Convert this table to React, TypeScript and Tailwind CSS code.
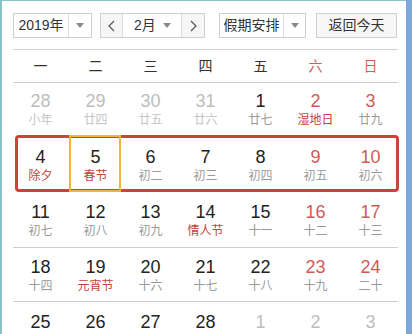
import React from 'react';

type Day = { d: number; l?: string; muted?: boolean; red?: boolean; fest?: boolean };

const WEEKS: Day[][] = [
  [
    { d: 28, l: '小年', muted: true },
    { d: 29, l: '廿四', muted: true },
    { d: 30, l: '廿五', muted: true },
    { d: 31, l: '廿六', muted: true },
    { d: 1, l: '廿七' },
    { d: 2, l: '湿地日', red: true, fest: true },
    { d: 3, l: '廿九', red: true },
  ],
  [
    { d: 4, l: '除夕', fest: true },
    { d: 5, l: '春节', fest: true },
    { d: 6, l: '初二' },
    { d: 7, l: '初三' },
    { d: 8, l: '初四' },
    { d: 9, l: '初五', red: true },
    { d: 10, l: '初六', red: true },
  ],
  [
    { d: 11, l: '初七' },
    { d: 12, l: '初八' },
    { d: 13, l: '初九' },
    { d: 14, l: '情人节', fest: true },
    { d: 15, l: '十一' },
    { d: 16, l: '十二', red: true },
    { d: 17, l: '十三', red: true },
  ],
  [
    { d: 18, l: '十四' },
    { d: 19, l: '元宵节', fest: true },
    { d: 20, l: '十六' },
    { d: 21, l: '十七' },
    { d: 22, l: '十八' },
    { d: 23, l: '十九', red: true },
    { d: 24, l: '二十', red: true },
  ],
  // last row is cut by the window, only the numbers show
  [
    { d: 25 },
    { d: 26 },
    { d: 27 },
    { d: 28 },
    { d: 1, muted: true },
    { d: 2, muted: true },
    { d: 3, muted: true },
  ],
];

const WEEKDAYS = ['一', '二', '三', '四', '五', '六', '日'];

const Caret = () => (
  <svg width="8" height="5" viewBox="0 0 8 5">
    <path d="M0 0h8L4 5z" fill="#8a8a8a" />
  </svg>
);

const Chevron = ({ dir }: { dir: 'l' | 'r' }) => (
  <svg width="7" height="12" viewBox="0 0 7 12">
    <polyline
      points={dir === 'l' ? '6,1 1,6 6,11' : '1,1 6,6 1,11'}
      fill="none"
      stroke="#555"
      strokeWidth="1.2"
    />
  </svg>
);

const Cell = ({ day, selected }: { day: Day; selected?: boolean }) => {
  const numColor = day.muted ? 'text-[#bdbdbd]' : day.red ? 'text-[#cf5b58]' : 'text-[#222]';
  const lunarColor = day.muted
    ? 'text-[#c4c4c4]'
    : day.fest
    ? 'text-[#c8403a]'
    : 'text-[#9a9a9a]';
  return (
    <div className="relative flex flex-col items-center">
      {selected && (
        <div className="absolute left-[1px] right-[2px] top-[-12px] bottom-[-8px] border-2 border-[#f3b43c]" />
      )}
      <span className={`text-[18px] leading-[20px] ${numColor}`}>{day.d}</span>
      {day.l && <span className={`mt-px text-[12px] leading-[16px] ${lunarColor}`}>{day.l}</span>}
    </div>
  );
};

const Week = ({ days, sel }: { days: Day[]; sel?: number }) => (
  <div className="grid grid-cols-[repeat(7,55px)]">
    {days.map((day, i) => (
      <Cell key={i} day={day} selected={sel === i} />
    ))}
  </div>
);

const App = () => {
  return (
    <div
      className="w-[412px] h-[334px] overflow-hidden bg-white flex"
      style={{ fontFamily: '"Liberation Sans", "Noto Sans CJK SC", sans-serif' }}
    >
      <div className="flex-1 border-l-2 border-t border-[#88c1c9] pl-[11px]">
        {/* toolbar */}
        <div className="flex pt-[12px] text-[14px] text-[#333]">
          <div className="flex h-[25px] w-[79px] border border-[#cfcfcf]">
            <div className="flex w-[54px] items-center justify-center">2019年</div>
            <div className="flex flex-1 items-center justify-center border-l border-[#dcdcdc]">
              <Caret />
            </div>
          </div>
          <div className="ml-[8px] flex h-[25px] w-[105px] border border-[#cfcfcf]">
            <div className="flex w-[21px] items-center justify-center bg-[#f6f6f6]">
              <Chevron dir="l" />
            </div>
            <div className="flex w-[60px] items-center border-x border-[#dcdcdc] pl-[11px]">
              <span>2月</span>
              <span className="ml-auto mr-[10px] flex">
                <Caret />
              </span>
            </div>
            <div className="flex flex-1 items-center justify-center bg-[#f6f6f6]">
              <Chevron dir="r" />
            </div>
          </div>
          <div className="ml-[14px] flex h-[25px] w-[87px] border border-[#cfcfcf]">
            <div className="flex w-[63px] items-center justify-center">假期安排</div>
            <div className="flex flex-1 items-center justify-center border-l border-[#dcdcdc]">
              <Caret />
            </div>
          </div>
          <div className="ml-[10px] flex h-[25px] w-[81px] items-center justify-center border border-[#cfcfcf] bg-[#f7f7f7]">
            返回今天
          </div>
        </div>

        <div className="mt-[11px] w-[385px] border-t border-[#c9d3d8]" />

        {/* weekday header */}
        <div className="grid h-[33px] w-[385px] grid-cols-[repeat(7,55px)] items-center border-b border-[#cfcfcf] text-[14px]">
          {WEEKDAYS.map((w, i) => (
            <div key={w} className={`text-center ${i >= 5 ? 'text-[#d0605a]' : 'text-[#333]'}`}>
              {w}
            </div>
          ))}
        </div>

        <div className="h-[52px] pt-[8px]">
          <Week days={WEEKS[0]} />
        </div>

        <div className="ml-[2px] h-[57px] w-[384px] rounded-[4px] border-[3px] border-[#c8453c] pt-[9px]">
          <div className="ml-[-5px]">
            <Week days={WEEKS[1]} sel={1} />
          </div>
        </div>

        <div className="h-[56px] w-[385px] border-b border-[#cfcfcf] pt-[10px]">
          <Week days={WEEKS[2]} />
        </div>
        <div className="h-[54px] w-[385px] border-b border-[#cfcfcf] pt-[9px]">
          <Week days={WEEKS[3]} />
        </div>
        <div className="pt-[10px]">
          <Week days={WEEKS[4]} />
        </div>
      </div>
      <div className="w-[6px] bg-[#7aa8dc]" />
    </div>
  );
};

export default App;
